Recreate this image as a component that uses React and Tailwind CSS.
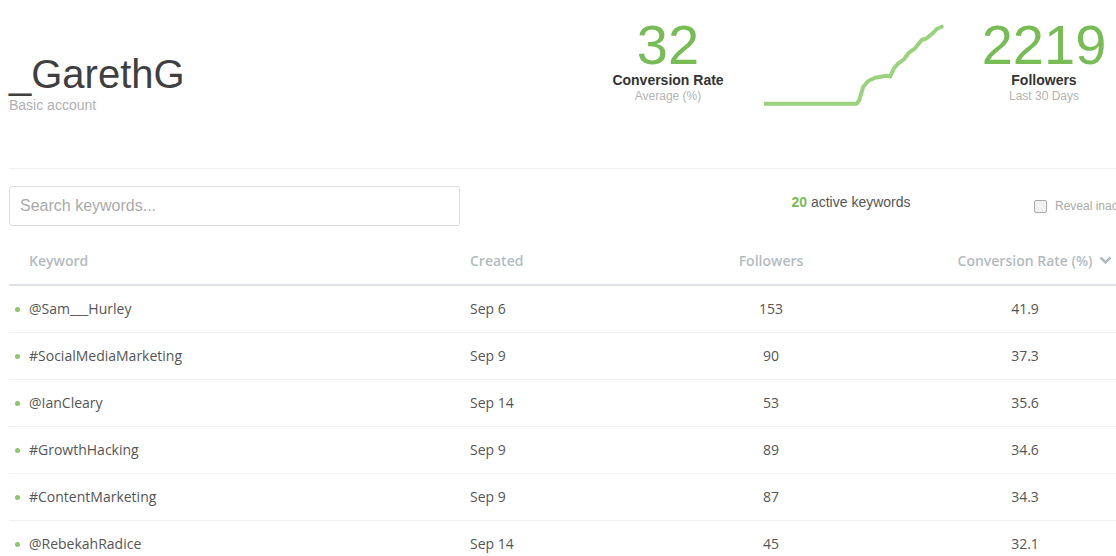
import React from 'react';

const keywords = [
  { name: '@Sam___Hurley', created: 'Sep 6', followers: 153, rate: '41.9' },
  { name: '#SocialMediaMarketing', created: 'Sep 9', followers: 90, rate: '37.3' },
  { name: '@IanCleary', created: 'Sep 14', followers: 53, rate: '35.6' },
  { name: '#GrowthHacking', created: 'Sep 9', followers: 89, rate: '34.6' },
  { name: '#ContentMarketing', created: 'Sep 9', followers: 87, rate: '34.3' },
  { name: '@RebekahRadice', created: 'Sep 14', followers: 45, rate: '32.1' },
];

const chartPoints =
  '0,81.7 92.7,81.7 95.3,78 99.3,64.7 104.3,59 111,55.7 122.7,53.7 126,54.7 130,46.3 134.3,41.3 140,37.3 145.3,30.3 151,26.3 157.7,18 162.7,16.3 168.7,11.3 172.7,7 177.7,4.7';

const Stat = ({ value, label, sub, width }) => (
  <div className={`flex flex-col items-center ${width}`}>
    <div className="text-[56px] leading-[50px] pb-[2px] text-[#78bc56]">{value}</div>
    <div className="text-sm leading-4 font-bold text-[#333]">{label}</div>
    <div className="mt-[1px] text-xs leading-[14px] text-[#b3b3b3]">{sub}</div>
  </div>
);

const App = () => {
  return (
    <div className="w-[1116px] h-[556px] overflow-hidden bg-white pl-[9px] font-['Liberation_Sans',Arial,sans-serif]">
      {/* header */}
      <div className="flex h-[169px] border-b border-[#eeeeee]">
        <div className="pt-[54px]">
          <h1 className="text-[40px] leading-[40px] text-[#3f3f3f]">_GarethG</h1>
          <div className="mt-[3px] text-sm leading-4 text-[#b0b0b0]">Basic account</div>
        </div>
        <div className="ml-auto flex items-start pt-[20px]">
          <Stat value="32" label="Conversion Rate" sub="Average (%)" width="w-[130px]" />
          <svg className="ml-[31px] mt-[2px] shrink-0" width="180" height="86" viewBox="0 0 180 86">
            <polyline
              points={chartPoints}
              fill="none"
              stroke="#9bd27d"
              strokeWidth="4"
              strokeLinejoin="round"
              strokeLinecap="round"
            />
          </svg>
          <Stat value="2219" label="Followers" sub="Last 30 Days" width="ml-[28px] w-[144px]" />
        </div>
      </div>

      {/* toolbar */}
      <div className="flex items-center pt-[17px] whitespace-nowrap">
        <input
          type="text"
          placeholder="Search keywords..."
          className="shrink-0 w-[451px] h-10 border border-[#dddddd] rounded-[3px] px-[10px] text-base text-[#555] placeholder:text-[#aaaaaa] outline-none"
        />
        <div className="shrink-0 ml-[251px] w-[280px] text-center text-sm text-[#555] -mt-[8px]">
          <span className="font-bold text-[#78bc56]">20</span> active keywords
        </div>
        <label className="shrink-0 ml-[43px] flex items-center text-xs text-[#aaaaaa]">
          <span className="w-[13px] h-[13px] border border-[#a9a9a9] rounded-[2px] bg-[#f1f1f1] mr-[8px]" />
          Reveal inactive keywords
        </label>
      </div>

      {/* table */}
      <div className="mt-[12px] w-[1149px] font-['Open_Sans',sans-serif] text-sm">
        <div className="flex items-center h-12 border-b-2 border-[#dde2e6] font-semibold text-[#b4bbbf]">
          <div className="w-[441px] pl-5">Keyword</div>
          <div className="w-[200px] pl-5">Created</div>
          <div className="w-[242px] text-center">Followers</div>
          <div className="w-[266px] text-center">
            <span className="relative">
              Conversion Rate (%)
              <svg className="absolute left-full top-[5px] ml-[7px]" width="13" height="9" viewBox="0 0 13 9">
                <polyline points="1.5,1.5 6.5,6.5 11.5,1.5" fill="none" stroke="#b4bbbf" strokeWidth="2.6" />
              </svg>
            </span>
          </div>
        </div>
        {keywords.map((k) => (
          <div key={k.name} className="flex items-center h-[47px] border-b border-[#eef1f4] text-[#555]">
            <div className="w-[441px] flex items-center">
              <span className="ml-[6px] w-[5px] h-[5px] rounded-full bg-[#8cc866]" />
              <span className="ml-[9px]">{k.name}</span>
            </div>
            <div className="w-[200px] pl-5">{k.created}</div>
            <div className="w-[242px] text-center">{k.followers}</div>
            <div className="w-[266px] text-center">{k.rate}</div>
          </div>
        ))}
      </div>
    </div>
  );
};

export default App;
